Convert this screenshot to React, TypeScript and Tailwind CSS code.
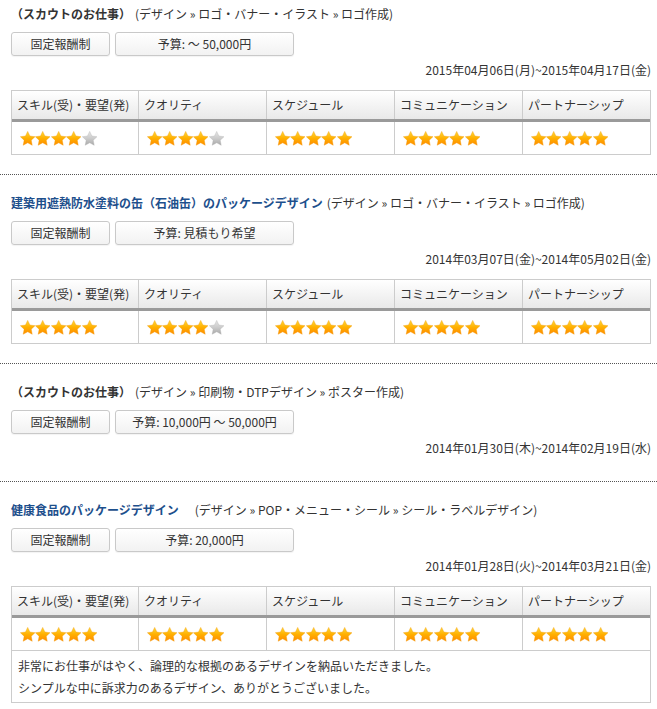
import { useId } from "react";

type Sec = {
  title: string;
  blue: boolean;
  cat: string;
  catGap: string;
  budget: string;
  date: string;
  ratings?: number[];
  comment?: string[];
};

const SECTIONS: Sec[] = [
  {
    title: "（スカウトのお仕事）",
    blue: false,
    cat: "(デザイン » ロゴ・バナー・イラスト » ロゴ作成)",
    catGap: "ml-[4px]",
    budget: "予算: ～ 50,000円",
    date: "2015年04月06日(月)~2015年04月17日(金)",
    ratings: [4, 4, 5, 5, 5],
  },
  {
    title: "建築用遮熱防水塗料の缶（石油缶）のパッケージデザイン",
    blue: true,
    cat: "(デザイン » ロゴ・バナー・イラスト » ロゴ作成)",
    catGap: "ml-[4px]",
    budget: "予算: 見積もり希望",
    date: "2014年03月07日(金)~2014年05月02日(金)",
    ratings: [5, 4, 5, 5, 5],
  },
  {
    title: "（スカウトのお仕事）",
    blue: false,
    cat: "(デザイン » 印刷物・DTPデザイン » ポスター作成)",
    catGap: "ml-[4px]",
    budget: "予算: 10,000円 ～ 50,000円",
    date: "2014年01月30日(木)~2014年02月19日(水)",
  },
  {
    title: "健康食品のパッケージデザイン",
    blue: true,
    cat: "(デザイン » POP・メニュー・シール » シール・ラベルデザイン)",
    catGap: "ml-[16px]",
    budget: "予算: 20,000円",
    date: "2014年01月28日(火)~2014年03月21日(金)",
    ratings: [5, 5, 5, 5, 5],
    comment: [
      "非常にお仕事がはやく、論理的な根拠のあるデザインを納品いただきました。",
      "シンプルな中に訴求力のあるデザイン、ありがとうございました。",
    ],
  },
];

const HEADERS = ["スキル(受)・要望(発)", "クオリティ", "スケジュール", "コミュニケーション", "パートナーシップ"];

const STAR_POINTS =
  "8,0.4 10.35,5.36 15.8,6.07 11.8,9.84 12.82,15.23 8,12.6 3.18,15.23 4.2,9.84 0.2,6.07 5.65,5.36";

function Star({ on }: { on: boolean }) {
  const id = useId().replace(/:/g, "");
  return (
    <svg viewBox="0 0 16 16" className="w-[15.4px] h-[15px] shrink-0">
      <defs>
        <linearGradient id={id} x1="0" y1="0" x2="0" y2="1">
          {on ? (
            <>
              <stop offset="0" stopColor="#ffd83a" />
              <stop offset="0.5" stopColor="#ffb000" />
              <stop offset="1" stopColor="#ff8a00" />
            </>
          ) : (
            <>
              <stop offset="0" stopColor="#e6e6e6" />
              <stop offset="0.5" stopColor="#cccccc" />
              <stop offset="1" stopColor="#a8a8a8" />
            </>
          )}
        </linearGradient>
      </defs>
      <polygon points={STAR_POINTS} fill={`url(#${id})`} stroke={on ? "#f29a00" : "#b5b5b5"} strokeWidth="0.4" strokeLinejoin="round" />
    </svg>
  );
}

function Stars({ n }: { n: number }) {
  return (
    <div className="flex items-center">
      {[0, 1, 2, 3, 4].map((i) => (
        <Star key={i} on={i < n} />
      ))}
    </div>
  );
}

function Table({ ratings, comment }: { ratings: number[]; comment?: string[] }) {
  const cols = "grid grid-cols-[126px_128px_128px_128px_1fr]";
  return (
    <div className="mt-[12px] border border-[#cccccc] w-[640px]">
      <div className={`${cols} bg-gradient-to-b from-white to-[#e9e9e9] border-b-[3px] border-[#9a9a9a]`}>
        {HEADERS.map((h, i) => (
          <div
            key={h}
            className={`h-[28px] flex items-center pl-[5px] text-[12px] leading-[16px] text-[#333] ${i > 0 ? "border-l border-[#cccccc]" : ""}`}
          >
            {h}
          </div>
        ))}
      </div>
      <div className={`${cols}`}>
        {ratings.map((r, i) => (
          <div
            key={i}
            className={`h-[32px] flex items-center pl-[8px] ${i > 0 ? "border-l border-[#cccccc]" : ""}`}
          >
            <Stars n={r} />
          </div>
        ))}
      </div>
      {comment && (
        <div className="border-t border-[#cccccc] pt-[4px] pb-[3px] pl-[6px] text-[12px] leading-[22px] text-[#333]">
          {comment.map((c) => (
            <div key={c}>{c}</div>
          ))}
        </div>
      )}
    </div>
  );
}

function Section({ s, idx }: { s: Sec; idx: number }) {
  const last = idx === SECTIONS.length - 1;
  const pt = idx === 0 ? "pt-[5px]" : "pt-[19px]";
  const pb = last ? "pb-[8px]" : s.ratings ? "pb-[19px]" : "pb-[25px]";
  const border = last ? "" : "border-b border-dotted border-[#555555]";
  return (
    <div className={`${pt} ${pb} ${border}`}>
      <div className="pl-[11px] pr-[6px]">
        <div className="h-[18px] flex items-center text-[12px] leading-[18px] whitespace-nowrap">
          <span className={`font-bold ${s.blue ? "text-[#1d4f8c]" : "text-[#333]"}`}>{s.title}</span>
          <span className={`${s.catGap} text-[#333]`}>{s.cat}</span>
        </div>
        <div className="mt-[9px] flex gap-[5px]">
          <div className="w-[99px] h-[24px] flex items-center justify-center rounded-[3px] border border-[#c9c9c9] bg-gradient-to-b from-white to-[#f2f2f2] shadow-[0_1px_1px_rgba(0,0,0,0.05)] text-[12px] text-[#333]">
            固定報酬制
          </div>
          <div className="w-[179px] h-[24px] flex items-center justify-center rounded-[3px] border border-[#c9c9c9] bg-gradient-to-b from-white to-[#f2f2f2] shadow-[0_1px_1px_rgba(0,0,0,0.05)] text-[12px] text-[#333]">
            {s.budget}
          </div>
        </div>
        <div className="mt-[6px] h-[16px] text-right text-[12px] leading-[16px] text-[#333] whitespace-nowrap">
          {s.date}
        </div>
        {s.ratings && <Table ratings={s.ratings} comment={s.comment} />}
      </div>
    </div>
  );
}

export default function App() {
  return (
    <div className="w-[657px] min-h-[709px] bg-white font-['Noto_Sans_CJK_JP','Noto_Sans',sans-serif]">
      {SECTIONS.map((s, i) => (
        <Section key={i} s={s} idx={i} />
      ))}
    </div>
  );
}
